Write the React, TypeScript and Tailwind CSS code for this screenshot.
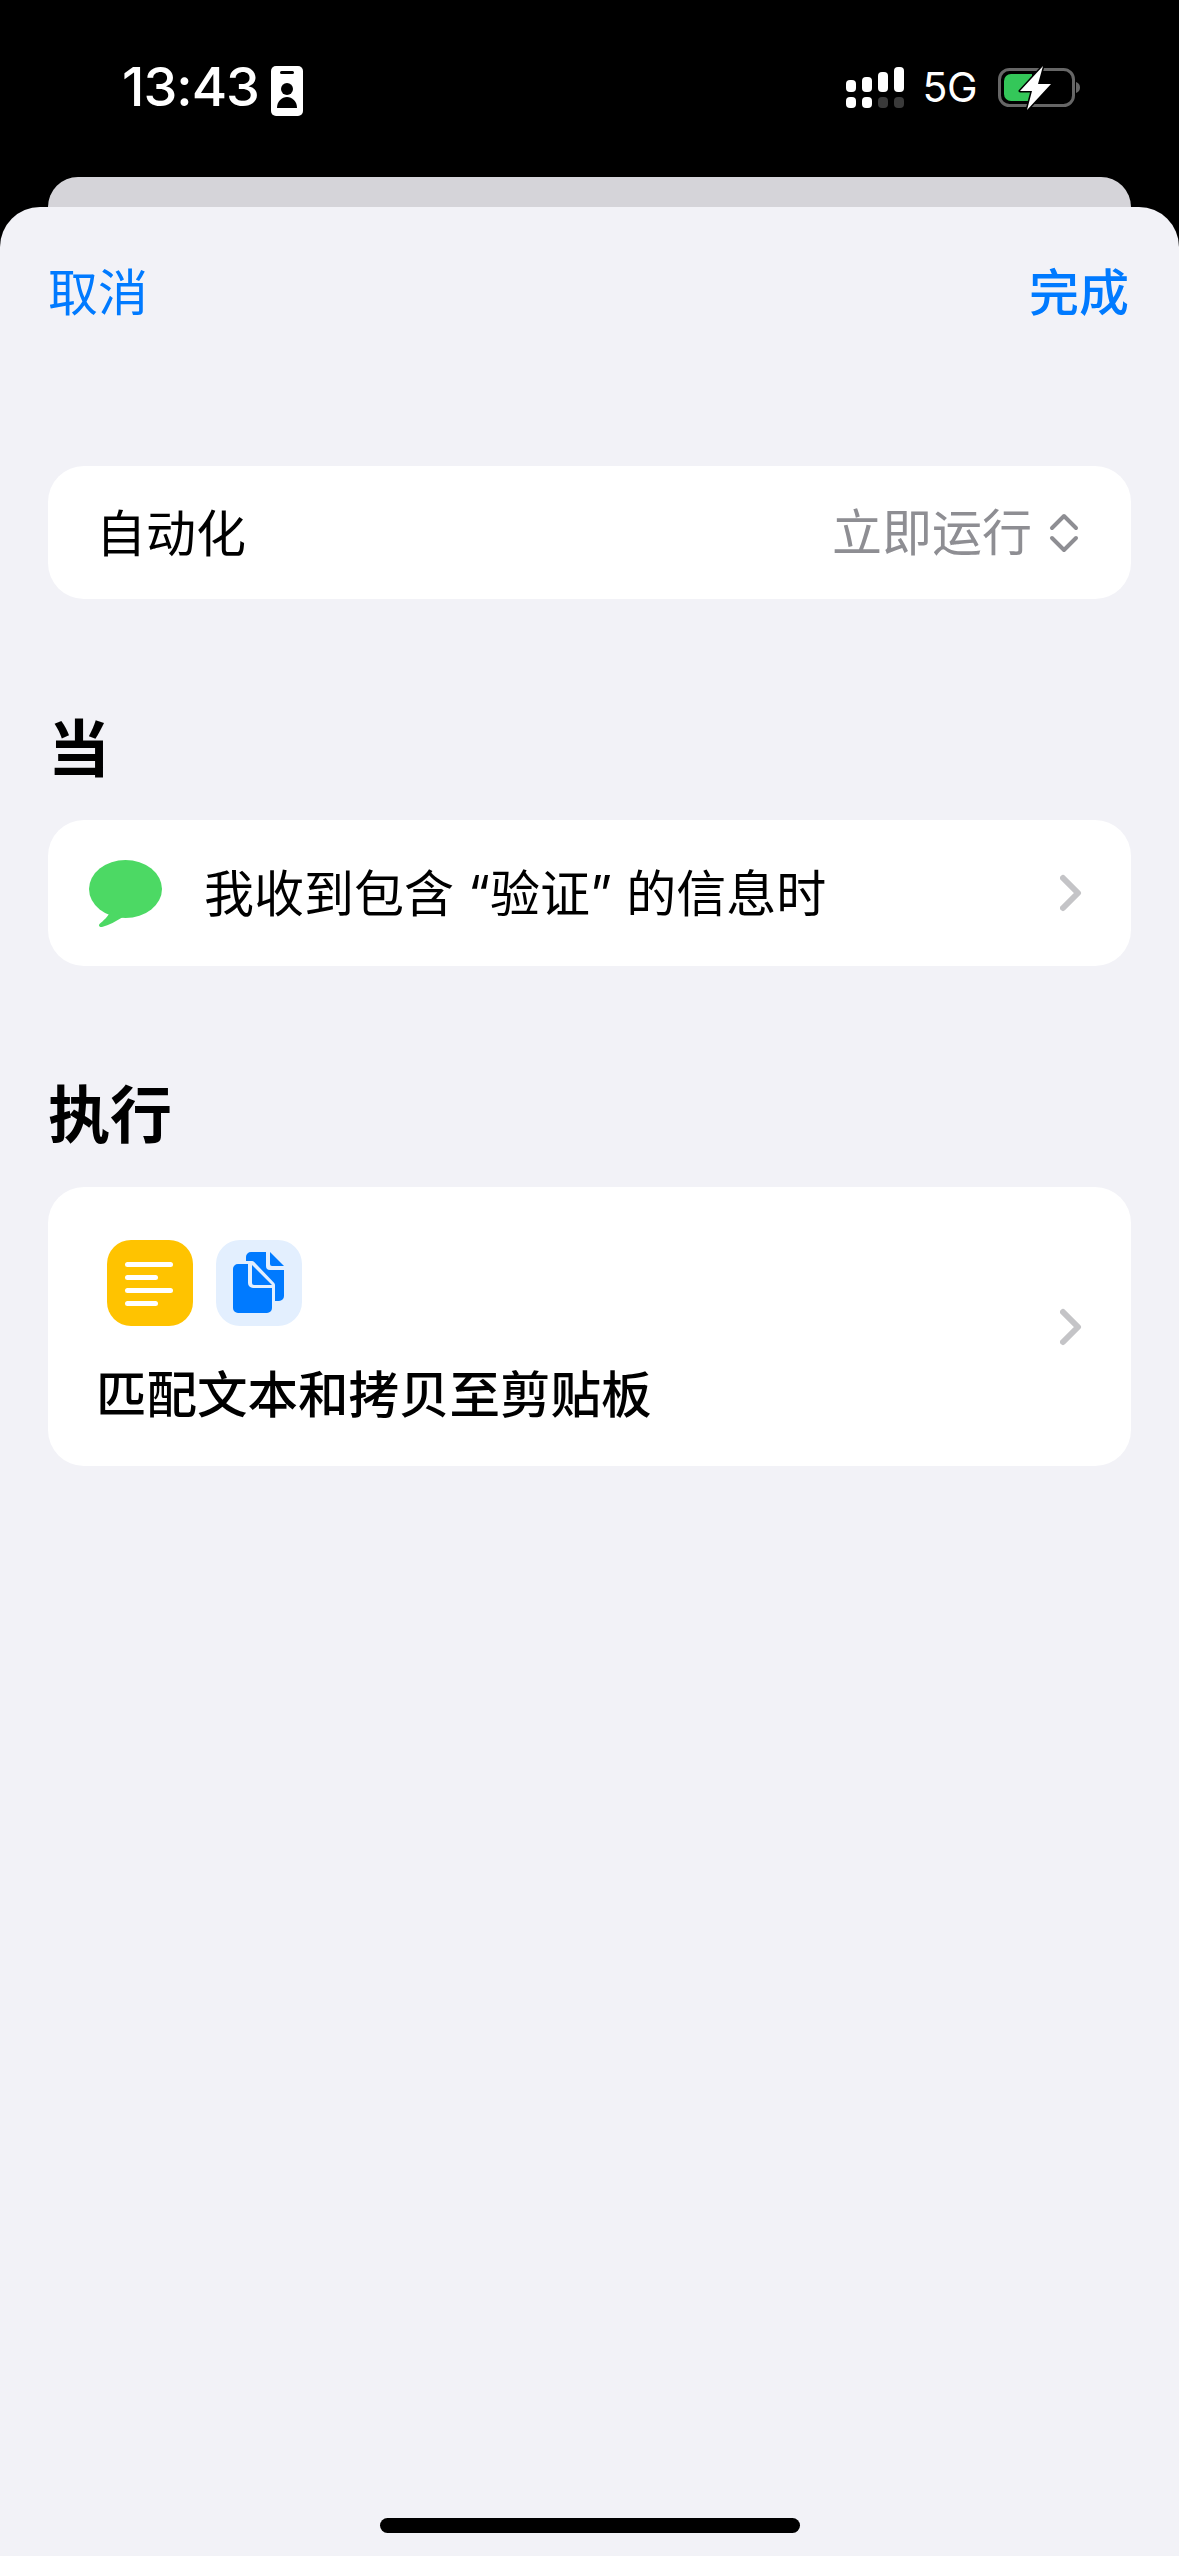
const cjk = "font-['Inter','Noto_Sans_CJK_SC',sans-serif]"

const Chevron = () => (
  <svg width="27" height="40" viewBox="0 0 27 40" className="shrink-0">
    <path d="M3 5 L18 20 L3 35" fill="none" stroke="#c4c4c7" strokeWidth="6" strokeLinecap="round" strokeLinejoin="round" />
  </svg>
)

const StatusBar = () => (
  <div className="h-[177px] shrink-0 flex justify-between pl-[122px] pr-[97px] text-white">
    <div className="flex items-start gap-[12px] pt-[60px]">
      <span className="font-['Inter',sans-serif] font-medium text-[54px] leading-[54px] tracking-[-1px]">13:43</span>
      <svg width="32" height="50" viewBox="0 0 32 50" className="mt-[6px]">
        <rect width="32" height="50" rx="5" fill="#fff" />
        <rect x="9" y="5" width="14" height="3" rx="1.5" fill="#000" />
        <circle cx="16" cy="23" r="6" fill="#000" />
        <path d="M6 42 C6 35 11 31 16 31 C21 31 26 35 26 42 Z" fill="#000" />
      </svg>
    </div>
    <div className="flex items-start pt-[67px]">
      <svg width="58" height="41" viewBox="0 0 58 41">
        <rect x="0" y="13" width="10" height="12" rx="4" fill="#fff" />
        <rect x="16" y="10" width="10" height="15" rx="4" fill="#fff" />
        <rect x="32" y="5" width="10" height="20" rx="4" fill="#fff" />
        <rect x="48" y="0" width="10" height="25" rx="4" fill="#fff" />
        <rect x="0" y="30" width="10" height="11" rx="4" fill="#fff" />
        <rect x="16" y="30" width="10" height="11" rx="4" fill="#fff" />
        <rect x="32" y="30" width="10" height="11" rx="4" fill="#3a3a3a" />
        <rect x="48" y="30" width="10" height="11" rx="4" fill="#3a3a3a" />
      </svg>
      <span className="ml-[18px] font-['Inter',sans-serif] text-[41px] leading-[40px] tracking-[-0.5px]">5G</span>
      <svg width="84" height="44" viewBox="0 0 84 44" className="ml-[21px] -mt-[1px]">
        <rect x="1.5" y="3.5" width="74" height="36" rx="10" fill="none" stroke="#666" strokeWidth="3" />
        <path d="M78 16 C81 17 82 19 82 21.5 C82 24 81 26 78 27 Z" fill="#666" />
        <path d="M13 8 H34 V35 H13 A7 7 0 0 1 6 28 V15 A7 7 0 0 1 13 8 Z" fill="#34c759" />
        <path d="M45 0 L22 25 H34 L29 44 L53 18 H40 Z" fill="#fff" stroke="#000" strokeWidth="3" paintOrder="stroke" strokeLinejoin="round" />
      </svg>
    </div>
  </div>
)

export default function App() {
  return (
    <div className={`h-[2556px] w-[1179px] bg-black flex flex-col overflow-hidden ${cjk}`}>
      <StatusBar />
      <div className="mx-[48px] h-[30px] shrink-0 rounded-t-[30px] bg-[#d5d4d9]" />
      <div className="flex-1 flex flex-col rounded-t-[40px] bg-[#f2f2f7] px-[48px] text-black">
        <div className="flex justify-between pt-[56px] pr-[2px] text-[#007aff] text-[50px] leading-[60px]">
          <span>取消</span>
          <span className="font-medium">完成</span>
        </div>

        <div className="mt-[143px] h-[133px] rounded-[36px] bg-white flex items-center justify-between pl-[48px] pr-[52px] text-[50px]">
          <span className="pt-[3px]">自动化</span>
          <div className="flex items-center gap-[17px] text-[#8e8e93]">
            <span className="pt-[2px]">立即运行</span>
            <svg width="30" height="40" viewBox="0 0 30 40">
              <path d="M3 15 L15 3 L27 15 M3 25 L15 37 L27 25" fill="none" stroke="#8e8e93" strokeWidth="4" strokeLinecap="round" strokeLinejoin="round" />
            </svg>
          </div>
        </div>

        <div className="mt-[116px] text-[62px] leading-[70px] font-bold">当</div>
        <div className="mt-[35px] h-[146px] rounded-[36px] bg-white flex items-center pl-[41px] pr-[44px] text-[50px]">
          <svg width="73" height="67" viewBox="0 0 73 67" className="shrink-0">
            <ellipse cx="36.5" cy="29" rx="36.5" ry="29" fill="#4cd964" />
            <path d="M22 50 C20 56 14 61 10.5 64 C9 66 11 67.5 13 67 C20 65.5 27 61 34 57 Z" fill="#4cd964" />
          </svg>
          <span className="ml-[42px] pt-[2px]">我收到包含 “验证” 的信息时</span>
          <div className="ml-auto"><Chevron /></div>
        </div>

        <div className="mt-[115px] text-[62px] leading-[70px] font-bold">执行</div>
        <div className="mt-[36px] h-[279px] rounded-[36px] bg-white flex items-center pr-[44px]">
          <div className="flex-1 self-start pt-[53px] pl-[48px]">
            <div className="flex gap-[23px] pl-[11px]">
              <div className="w-[86px] h-[86px] rounded-[24px] bg-[#ffc300] flex flex-col gap-[8px] pt-[22px] pl-[18px]">
                <div className="w-[48px] h-[5px] rounded-full bg-white" />
                <div className="w-[33px] h-[5px] rounded-full bg-white" />
                <div className="w-[48px] h-[5px] rounded-full bg-white" />
                <div className="w-[33px] h-[5px] rounded-full bg-white" />
              </div>
              <div className="w-[86px] h-[86px] rounded-[24px] bg-[#e3effe]">
                <svg width="86" height="86" viewBox="0 0 86 86">
                  <path d="M35 12 H50 V26 A4 4 0 0 0 54 30 H68 V56 A5 5 0 0 1 63 61 H35 A5 5 0 0 1 30 56 V17 A5 5 0 0 1 35 12 Z" fill="#007aff" />
                  <path d="M54 12 L68 26 H56 A2 2 0 0 1 54 24 Z" fill="#007aff" />
                  <path d="M22 24 H36 L56 45 V68 A5 5 0 0 1 51 73 H22 A5 5 0 0 1 17 68 V29 A5 5 0 0 1 22 24 Z" fill="#e3effe" stroke="#e3effe" strokeWidth="6" strokeLinejoin="round" />
                  <path d="M22 24 H32 V43 A5 5 0 0 0 37 48 H56 V68 A5 5 0 0 1 51 73 H22 A5 5 0 0 1 17 68 V29 A5 5 0 0 1 22 24 Z" fill="#007aff" />
                  <path d="M36 25 L56 45 H38 A2 2 0 0 1 36 43 Z" fill="#007aff" />
                </svg>
              </div>
            </div>
            <div className="mt-[39px] text-[50.5px] leading-[60px] font-medium">匹配文本和拷贝至剪贴板</div>
          </div>
          <Chevron />
        </div>

        <div className="mt-auto mb-[23px] mx-auto w-[420px] h-[15px] rounded-full bg-black" />
      </div>
    </div>
  )
}
